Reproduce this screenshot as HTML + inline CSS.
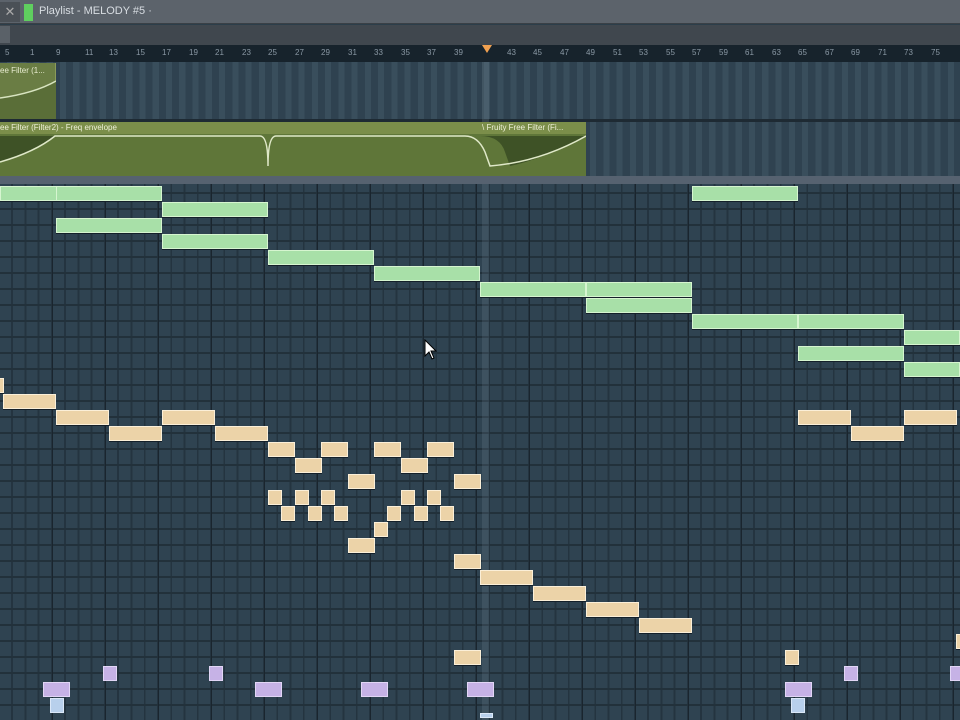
<!DOCTYPE html>
<html><head><style>
body{margin:0;width:960px;height:720px;overflow:hidden;background:#2c3e4a;font-family:"Liberation Sans",sans-serif;position:relative}
div{position:absolute;box-sizing:border-box}
.g{background:#a8e0a8;border:1px solid #d6f5d0;height:15px;box-shadow:0 1px 0 #14202a}
.p{background:#ecd3a8;border:1px solid #fbefd8;height:15px;box-shadow:0 1px 0 #14202a}
.v{background:#c6b2e6;border:1px solid #e2d6f6;height:15px}
.b{background:#b8d0ec;border:1px solid #dbe8f8;height:15px}
.r{top:48px;color:#8a98a4;font-size:8px}
</style></head><body>
<div style="left:0;top:0;width:960px;height:24px;background:#5c636b;border-bottom:1px solid #3a4046"></div>
<div style="left:0;top:2px;width:20px;height:20px;background:#4a5056;color:#aaa;font-size:13px;text-align:center;line-height:20px">✕</div>
<div style="left:24px;top:4px;width:9px;height:17px;background:#5fcf5f"></div>
<div style="left:39px;top:5px;color:#d8dde2;font-size:11px">Playlist - MELODY #5 ·</div>
<div style="left:0;top:25px;width:960px;height:20px;background:#40474e"></div>
<div style="left:0;top:26px;width:10px;height:17px;background:#5a6168"></div>
<div style="left:0;top:45px;width:960px;height:17px;background:#17232c"></div>
<div class="r" style="left:5px">5</div><div class="r" style="left:30px">1</div><div class="r" style="left:56px">9</div><div class="r" style="left:85px">11</div><div class="r" style="left:109px">13</div><div class="r" style="left:136px">15</div><div class="r" style="left:162px">17</div><div class="r" style="left:189px">19</div><div class="r" style="left:215px">21</div><div class="r" style="left:242px">23</div><div class="r" style="left:268px">25</div><div class="r" style="left:295px">27</div><div class="r" style="left:321px">29</div><div class="r" style="left:348px">31</div><div class="r" style="left:374px">33</div><div class="r" style="left:401px">35</div><div class="r" style="left:427px">37</div><div class="r" style="left:454px">39</div><div class="r" style="left:507px">43</div><div class="r" style="left:533px">45</div><div class="r" style="left:560px">47</div><div class="r" style="left:586px">49</div><div class="r" style="left:613px">51</div><div class="r" style="left:639px">53</div><div class="r" style="left:666px">55</div><div class="r" style="left:692px">57</div><div class="r" style="left:719px">59</div><div class="r" style="left:745px">61</div><div class="r" style="left:772px">63</div><div class="r" style="left:798px">65</div><div class="r" style="left:825px">67</div><div class="r" style="left:851px">69</div><div class="r" style="left:878px">71</div><div class="r" style="left:904px">73</div><div class="r" style="left:931px">75</div>
<div style="left:0;top:62px;width:960px;height:114px;background:repeating-linear-gradient(90deg,#2f4250 0 7px,#394e5c 7px 13.25px)"></div>
<div style="left:0;top:119px;width:960px;height:3px;background:#1e2a33"></div>
<div style="left:482px;top:62px;width:7px;height:658px;background:rgba(150,170,185,0.18)"></div>
<div style="left:482px;top:45px;width:10px;height:8px;background:#f0a050;clip-path:polygon(0 0,100% 0,50% 100%)"></div>
<div style="left:0;top:63px;width:56px;height:56px;background:#6a7d44;border-right:1px solid #8a9a5a"></div>
<div style="left:0;top:66px;color:#e8ecd0;font-size:8px">ee Filter (1...</div>
<svg style="position:absolute;left:0;top:63px" width="56" height="56"><path d="M0 35 Q35 30 56 18 L56 56 L0 56Z" fill="#5a6e38"/><path d="M0 35 Q35 30 56 18" stroke="#d8e4c0" fill="none" stroke-width="1.5"/></svg>
<div style="left:0;top:122px;width:586px;height:54px;background:#5f7639"></div>
<div style="left:0;top:122px;width:586px;height:12px;background:#7b8e4a"></div>
<div style="left:0;top:123px;color:#eef0d8;font-size:8px">ee Filter (Filter2) - Freq envelope</div>
<div style="left:482px;top:123px;color:#eef0d8;font-size:8px">\ Fruity Free Filter (Fi...</div>
<svg style="position:absolute;left:0;top:122px" width="586" height="54"><path d="M0 40 Q35 30 55 14 L0 14Z" fill="#3e5226"/><path d="M480 14 Q500 14 505 30 L510 44 Q540 38 586 14Z" fill="#3e5226"/><path d="M0 40 Q35 30 55 14 L260 14 Q268 14 268 44 Q268 14 276 14 L465 14 Q478 14 485 30 L490 44 Q540 40 586 14" stroke="#dfe8c8" fill="none" stroke-width="1.5"/></svg>
<div style="left:0;top:176px;width:960px;height:8px;background:#566270"></div>
<div style="left:0;top:184px;width:960px;height:536px;background:repeating-linear-gradient(0deg,transparent 0 14px,#22313b 14px 16px),repeating-linear-gradient(90deg,#2f4351 0 11.25px,#243440 11.25px 13.25px)"></div>
<div style="left:0;top:184px;width:960px;height:536px;background:repeating-linear-gradient(90deg,transparent 0 52px,#1a252e 52px 53px)"></div>
<div style="left:482px;top:184px;width:7px;height:536px;background:rgba(150,170,185,0.15)"></div>
<div class="g" style="left:0;top:186px;width:57px"></div><div class="g" style="left:56px;top:186px;width:106px"></div>
<div class="g" style="left:162px;top:202px;width:106px"></div>
<div class="g" style="left:56px;top:218px;width:106px"></div>
<div class="g" style="left:162px;top:234px;width:106px"></div>
<div class="g" style="left:268px;top:250px;width:106px"></div>
<div class="g" style="left:374px;top:266px;width:106px"></div>
<div class="g" style="left:480px;top:282px;width:106px"></div><div class="g" style="left:586px;top:282px;width:106px"></div>
<div class="g" style="left:586px;top:298px;width:106px"></div>
<div class="g" style="left:692px;top:186px;width:106px"></div>
<div class="g" style="left:692px;top:314px;width:106px"></div><div class="g" style="left:798px;top:314px;width:106px"></div>
<div class="g" style="left:798px;top:346px;width:106px"></div>
<div class="g" style="left:904px;top:330px;width:56px"></div>
<div class="g" style="left:904px;top:362px;width:56px"></div>
<div class="p" style="left:-2px;top:378px;width:6px"></div>
<div class="p" style="left:3px;top:394px;width:53px"></div>
<div class="p" style="left:56px;top:410px;width:53px"></div>
<div class="p" style="left:109px;top:426px;width:53px"></div>
<div class="p" style="left:162px;top:410px;width:53px"></div>
<div class="p" style="left:215px;top:426px;width:53px"></div>
<div class="p" style="left:268px;top:442px;width:27px"></div>
<div class="p" style="left:295px;top:458px;width:27px"></div>
<div class="p" style="left:321px;top:442px;width:27px"></div>
<div class="p" style="left:348px;top:474px;width:27px"></div>
<div class="p" style="left:374px;top:442px;width:27px"></div>
<div class="p" style="left:401px;top:458px;width:27px"></div>
<div class="p" style="left:427px;top:442px;width:27px"></div>
<div class="p" style="left:454px;top:474px;width:27px"></div>
<div class="p" style="left:268px;top:490px;width:14px"></div>
<div class="p" style="left:281px;top:506px;width:14px"></div>
<div class="p" style="left:295px;top:490px;width:14px"></div>
<div class="p" style="left:308px;top:506px;width:14px"></div>
<div class="p" style="left:321px;top:490px;width:14px"></div>
<div class="p" style="left:334px;top:506px;width:14px"></div>
<div class="p" style="left:374px;top:522px;width:14px"></div>
<div class="p" style="left:387px;top:506px;width:14px"></div>
<div class="p" style="left:401px;top:490px;width:14px"></div>
<div class="p" style="left:414px;top:506px;width:14px"></div>
<div class="p" style="left:427px;top:490px;width:14px"></div>
<div class="p" style="left:440px;top:506px;width:14px"></div>
<div class="p" style="left:348px;top:538px;width:27px"></div>
<div class="p" style="left:454px;top:554px;width:27px"></div>
<div class="p" style="left:480px;top:570px;width:53px"></div>
<div class="p" style="left:533px;top:586px;width:53px"></div>
<div class="p" style="left:586px;top:602px;width:53px"></div>
<div class="p" style="left:639px;top:618px;width:53px"></div>
<div class="p" style="left:454px;top:650px;width:27px"></div>
<div class="p" style="left:785px;top:650px;width:14px"></div>
<div class="p" style="left:956px;top:634px;width:6px"></div>
<div class="p" style="left:798px;top:410px;width:53px"></div>
<div class="p" style="left:851px;top:426px;width:53px"></div>
<div class="p" style="left:904px;top:410px;width:53px"></div>
<div class="v" style="left:43px;top:682px;width:27px"></div>
<div class="v" style="left:103px;top:666px;width:14px"></div>
<div class="v" style="left:209px;top:666px;width:14px"></div>
<div class="v" style="left:255px;top:682px;width:27px"></div>
<div class="v" style="left:361px;top:682px;width:27px"></div>
<div class="v" style="left:467px;top:682px;width:27px"></div>
<div class="v" style="left:785px;top:682px;width:27px"></div>
<div class="v" style="left:844px;top:666px;width:14px"></div>
<div class="v" style="left:950px;top:666px;width:12px"></div>
<div class="b" style="left:50px;top:698px;width:14px"></div>
<div class="b" style="left:791px;top:698px;width:14px"></div>
<div class="b" style="left:480px;top:713px;width:13px;height:5px"></div>
<svg style="position:absolute;left:424px;top:339px" width="14" height="22"><path d="M1 1 L1 17 L5 13 L8 20 L10 19 L7 12 L12 12 Z" fill="#fff" stroke="#000" stroke-width="1"/></svg>
</body></html>
